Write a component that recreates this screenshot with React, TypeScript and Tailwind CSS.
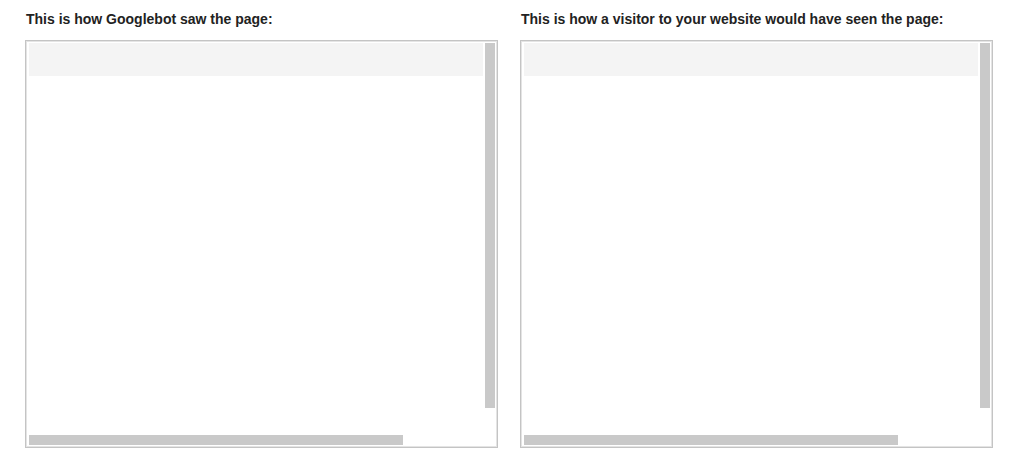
import React from 'react';

interface PreviewPaneProps {
  title: string;
}

// A fetched-page preview: empty framed box with fake scrollbars
function PreviewPane({ title }: PreviewPaneProps) {
  return (
    <div className="w-[473px] flex flex-col">
      <h2 className="text-[14px] leading-[16px] font-bold text-[#222] mb-[13px] pl-[1px] whitespace-nowrap">{title}</h2>
      <div className="h-[408px] flex flex-col border border-[#c4c4c4] shadow-[inset_0_0_0_1px_#e4e4e4] bg-white p-[1px]">
        <div className="h-[393px] flex pl-[2px] pt-[1px] pr-[1px]">
          <div className="flex-1 pr-[1px]">
            <div className="h-[33px] bg-[#f4f4f4]" />
          </div>
          <div className="w-[10px] ml-[1px] h-[365px] bg-[#c9c9c9]" />
        </div>
        <div className="pl-[2px]">
          <div className="w-[374px] h-[10px] bg-[#c9c9c9]" />
        </div>
      </div>
    </div>
  );
}

export default function App() {
  return (
    <div className="w-[1024px] h-[465px] bg-white pt-[11px] pl-[25px] flex gap-[22px]" style={{ fontFamily: '"Liberation Sans", Arial, sans-serif' }}>
      <PreviewPane title="This is how Googlebot saw the page:" />
      <PreviewPane title="This is how a visitor to your website would have seen the page:" />
    </div>
  );
}
